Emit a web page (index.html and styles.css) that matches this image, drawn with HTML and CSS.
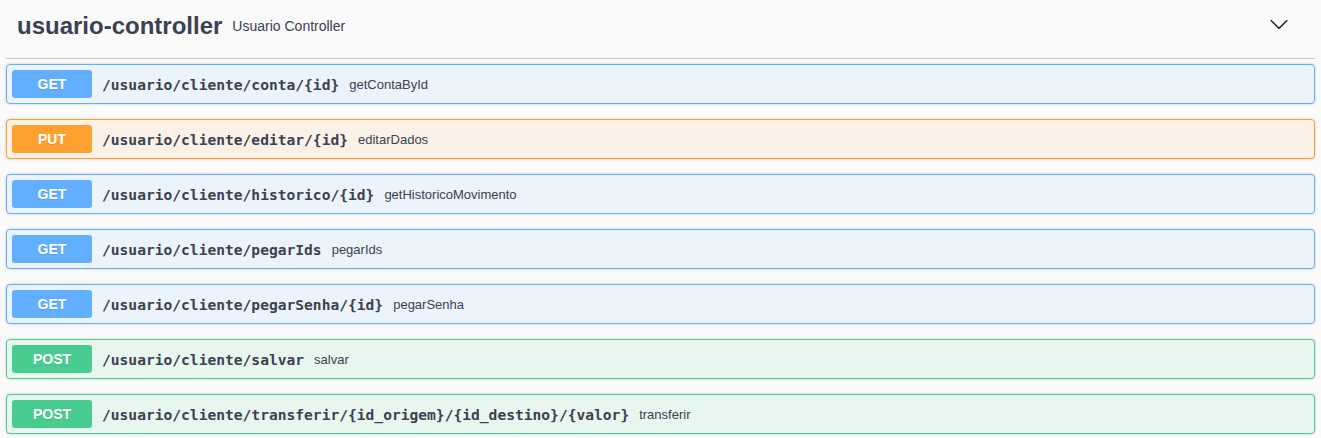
FILE: index.html
```html
<!DOCTYPE html>
<html lang="pt">
<head>
<meta charset="utf-8">
<title>usuario-controller</title>
<link rel="stylesheet" href="styles.css">
</head>
<body>
<div class="section">
  <div class="tag-header">
    <h3 class="tag-title">usuario-controller</h3>
    <small class="tag-desc">Usuario Controller</small>
    <svg class="chevron" width="20" height="20" viewBox="0 0 20 20" aria-hidden="true"><path d="M17.418 6.109c.272-.268.709-.268.979 0s.271.701 0 .969l-7.908 7.83c-.27.268-.707.268-.979 0l-7.908-7.830c-.27-.268-.27-.701 0-.969.271-.268.709-.268.979 0L10 13.25l7.418-7.141z"/></svg>
  </div>

  <div class="opblock get">
    <span class="method">GET</span>
    <span class="path">/usuario/cliente/conta/{id}</span>
    <span class="desc">getContaById</span>
  </div>
  <div class="opblock put">
    <span class="method">PUT</span>
    <span class="path">/usuario/cliente/editar/{id}</span>
    <span class="desc">editarDados</span>
  </div>
  <div class="opblock get">
    <span class="method">GET</span>
    <span class="path">/usuario/cliente/historico/{id}</span>
    <span class="desc">getHistoricoMovimento</span>
  </div>
  <div class="opblock get">
    <span class="method">GET</span>
    <span class="path">/usuario/cliente/pegarIds</span>
    <span class="desc">pegarIds</span>
  </div>
  <div class="opblock get">
    <span class="method">GET</span>
    <span class="path">/usuario/cliente/pegarSenha/{id}</span>
    <span class="desc">pegarSenha</span>
  </div>
  <div class="opblock post">
    <span class="method">POST</span>
    <span class="path">/usuario/cliente/salvar</span>
    <span class="desc">salvar</span>
  </div>
  <div class="opblock post">
    <span class="method">POST</span>
    <span class="path">/usuario/cliente/transferir/{id_origem}/{id_destino}/{valor}</span>
    <span class="desc">transferir</span>
  </div>
</div>
</body>
</html>
```

FILE: styles.css
```css
html, body {
  margin: 0;
  padding: 0;
  background: #fafafa;
}

body {
  font-family: "Liberation Sans", Arial, sans-serif;
  color: #3b4151;
}

.section {
  padding: 0 6px;
}

.tag-header {
  display: flex;
  align-items: center;
  height: 52px;
  padding: 0 0 6px 11px;
  border-bottom: 1px solid #c4c6cb;
  margin-bottom: 5px;
}

.tag-title {
  margin: 0;
  font-size: 24px;
  font-weight: 700;
  color: #3b4151;
}

.tag-desc {
  margin-left: 10px;
  font-size: 14px;
  color: #3b4151;
}

.chevron {
  margin-left: auto;
  margin-right: 26px;
  align-self: flex-start;
  margin-top: 14px;
  fill: #222;
}

.opblock {
  display: flex;
  align-items: center;
  height: 38px;
  padding: 0 5px;
  border: 1px solid;
  border-radius: 4px;
  box-shadow: 0 0 3px rgba(0, 0, 0, 0.19);
  margin-bottom: 15px;
}

.method {
  flex: none;
  width: 80px;
  height: 28px;
  line-height: 28px;
  text-align: center;
  border-radius: 3px;
  color: #fff;
  font-size: 14px;
  font-weight: 700;
  text-shadow: 0 1px 0 rgba(0, 0, 0, 0.1);
}

.path {
  padding: 0 10px;
  font-family: "DejaVu Sans Mono", "Liberation Mono", monospace;
  font-weight: 700;
  font-size: 14.6px;
  color: #3b4151;
}

.desc {
  font-size: 13px;
  color: #3b4151;
}

.get {
  background: #ebf3fb;
  border-color: #61affe;
}
.get .method { background: #61affe; }

.put {
  background: #fcf1e6;
  border-color: #fca130;
}
.put .method { background: #fca130; }

.post {
  background: #e8f6f0;
  border-color: #49cc90;
}
.post .method { background: #49cc90; }
```
